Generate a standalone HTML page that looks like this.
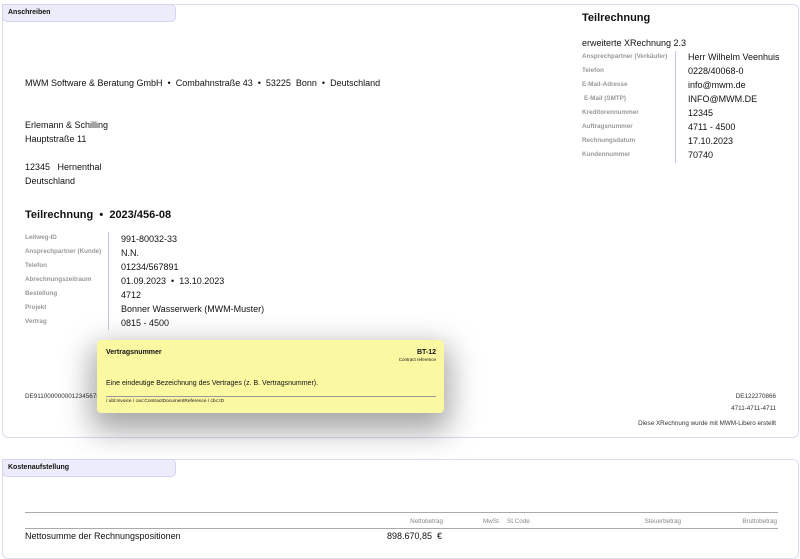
<!DOCTYPE html>
<html><head><meta charset="utf-8"><style>
*{margin:0;padding:0;box-sizing:border-box}
body{width:800px;height:543px;background:#fff;position:relative;overflow:hidden;font-family:"Liberation Sans",Arial,sans-serif;color:#111}
.a{position:absolute;white-space:nowrap}
.box{position:absolute;border:1px solid #dcdcf0;border-radius:6px;background:#fff}
.tab{position:absolute;background:#ececfb;border:1px solid #d4d4f0;border-radius:0 5px 5px 5px;font-size:7px;font-weight:bold;padding:4px 5px;height:18px}
.l{font-size:6.3px;color:#999;font-weight:bold}
.v{font-size:9px;color:#111}
.s{font-size:6.3px;color:#333}
.h{font-size:6.3px;color:#888}
</style></head><body>
<div class="box" style="left:2px;top:4px;width:797px;height:434px"></div>
<div class="tab" style="left:2px;top:4px;width:174px">Anschreiben</div>

<div class="a v" style="left:25px;top:78px">MWM Software &amp; Beratung GmbH &nbsp;•&nbsp; Combahnstraße 43 &nbsp;•&nbsp; 53225 &nbsp;Bonn &nbsp;•&nbsp; Deutschland</div>
<div class="a v" style="left:25px;top:120px">Erlemann &amp; Schilling</div>
<div class="a v" style="left:25px;top:134px">Hauptstraße 11</div>
<div class="a v" style="left:25px;top:162px">12345 &nbsp; Hernenthal</div>
<div class="a v" style="left:25px;top:176px">Deutschland</div>

<div class="a" style="left:582px;top:12px;font-size:11px;font-weight:bold">Teilrechnung</div>
<div class="a v" style="left:582px;top:38px">erweiterte XRechnung 2.3</div>
<div class="a" style="left:675px;top:51px;width:1px;height:112px;background:#c4c4ee"></div>
<div class="a l" style="left:582px;top:53px">Ansprechpartner (Verkäufer)</div><div class="a v" style="left:688px;top:52px">Herr Wilhelm Veenhuis</div>
<div class="a l" style="left:582px;top:67px">Telefon</div><div class="a v" style="left:688px;top:66px">0228/40068-0</div>
<div class="a l" style="left:582px;top:81px">E-Mail-Adresse</div><div class="a v" style="left:688px;top:80px">info@mwm.de</div>
<div class="a l" style="left:584px;top:95px">E-Mail (SMTP)</div><div class="a v" style="left:688px;top:94px">INFO@MWM.DE</div>
<div class="a l" style="left:582px;top:109px">Kreditorennummer</div><div class="a v" style="left:688px;top:108px">12345</div>
<div class="a l" style="left:582px;top:123px">Auftragsnummer</div><div class="a v" style="left:688px;top:122px">4711 - 4500</div>
<div class="a l" style="left:582px;top:137px">Rechnungsdatum</div><div class="a v" style="left:688px;top:136px">17.10.2023</div>
<div class="a l" style="left:582px;top:151px">Kundennummer</div><div class="a v" style="left:688px;top:150px">70740</div>

<div class="a" style="left:25px;top:209px;font-size:11px;font-weight:bold">Teilrechnung &nbsp;•&nbsp; 2023/456-08</div>
<div class="a" style="left:108px;top:232px;width:1px;height:98px;background:#c4c4ee"></div>
<div class="a l" style="left:25px;top:234px">Leitweg-ID</div><div class="a v" style="left:121px;top:234px">991-80032-33</div>
<div class="a l" style="left:25px;top:248px">Ansprechpartner (Kunde)</div><div class="a v" style="left:121px;top:248px">N.N.</div>
<div class="a l" style="left:25px;top:262px">Telefon</div><div class="a v" style="left:121px;top:262px">01234/567891</div>
<div class="a l" style="left:25px;top:276px">Abrechnungszeitraum</div><div class="a v" style="left:121px;top:276px">01.09.2023 &nbsp;•&nbsp; 13.10.2023</div>
<div class="a l" style="left:25px;top:290px">Bestellung</div><div class="a v" style="left:121px;top:290px">4712</div>
<div class="a l" style="left:25px;top:304px">Projekt</div><div class="a v" style="left:121px;top:304px">Bonner Wasserwerk (MWM-Muster)</div>
<div class="a l" style="left:25px;top:318px">Vertrag</div><div class="a v" style="left:121px;top:318px">0815 - 4500</div>

<div class="a s" style="left:25px;top:393px">DE91100000000123456789</div>
<div class="a s" style="right:24px;top:393px">DE122270866</div>
<div class="a s" style="right:24px;top:405px">4711-4711-4711</div>
<div class="a s" style="right:24px;top:420px">Diese XRechnung wurde mit MWM-Libero erstellt</div>

<div class="a" style="left:97px;top:340px;width:347px;height:73px;background:#fbf8a2;border-radius:4px;box-shadow:0 12px 30px 6px rgba(0,0,0,.35)">
<div class="a" style="left:9px;top:9px;font-size:7px;font-weight:bold">Vertragsnummer</div>
<div class="a" style="right:8px;top:9px;font-size:7px;font-weight:bold">BT-12</div>
<div class="a" style="right:8px;top:17px;font-size:4.5px">Contract reference</div>
<div class="a" style="left:9px;top:40px;font-size:7px">Eine eindeutige Bezeichnung des Vertrages (z. B. Vertragsnummer).</div>
<div class="a" style="left:9px;top:56px;width:330px;height:1px;background:#999"></div>
<div class="a" style="left:9px;top:59px;font-size:4.8px">/ ubl:Invoice / cac:ContractDocumentReference / cbc:ID</div>
</div>

<div class="box" style="left:2px;top:459px;width:797px;height:100px"></div>
<div class="tab" style="left:2px;top:459px;width:174px">Kostenaufstellung</div>
<div class="a" style="left:25px;top:512px;width:753px;height:1px;background:#aaa"></div>
<div class="a h" style="right:357px;top:518px">Nettobetrag</div>
<div class="a h" style="left:483px;top:518px">MwSt.</div>
<div class="a h" style="left:507px;top:518px">St.Code</div>
<div class="a h" style="right:119px;top:518px">Steuerbetrag</div>
<div class="a h" style="right:23px;top:518px">Bruttobetrag</div>
<div class="a" style="left:25px;top:528px;width:753px;height:1px;background:#aaa"></div>
<div class="a v" style="left:25px;top:531px">Nettosumme der Rechnungspositionen</div>
<div class="a v" style="right:358px;top:531px">898.670,85 &nbsp;€</div>
</body></html>
